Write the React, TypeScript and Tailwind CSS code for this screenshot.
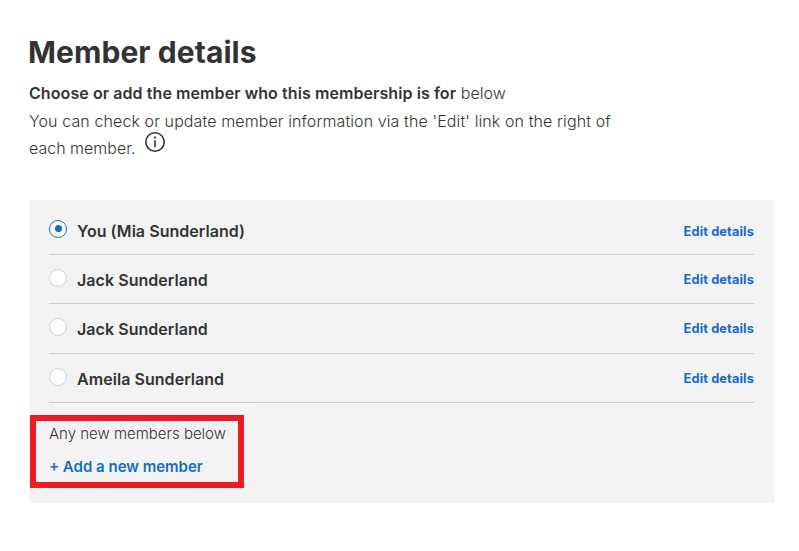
import React, { useState } from "react";

const members = [
  { id: 1, name: "You (Mia Sunderland)", row: "h-[55px] pt-[7px]", link: "pt-[2px]" },
  { id: 2, name: "Jack Sunderland", row: "h-[49px] pt-[2px]", link: "" },
  { id: 3, name: "Jack Sunderland", row: "h-[50px]", link: "" },
  { id: 4, name: "Ameila Sunderland", row: "h-[49px] pt-[2px]", link: "" },
];

function InfoIcon() {
  return (
    <svg className="mt-[-4px] ml-[9px] h-[22px] w-[22px]" viewBox="0 0 22 22" fill="none" stroke="#333333" strokeWidth="1.6">
      <circle cx="11" cy="11" r="9.2" />
      <path d="M11 9.2v7.1" />
      <circle cx="11" cy="6.6" r="1.1" fill="#333333" stroke="none" />
    </svg>
  );
}

export default function App() {
  const [selected, setSelected] = useState(1);

  return (
    <div className="h-[551px] w-[799px] overflow-hidden bg-white pl-[29px] font-[Inter,sans-serif] text-[#333333]">
      <h1 className="ml-[-1px] pt-[32px] text-[30px] leading-[40px] font-bold tracking-[0.07px]">Member details</h1>
      <p className="mt-[8px] text-[16px] leading-[27px] font-light tracking-[0.08px]">
        <span className="font-semibold">Choose or add the member who this membership is for</span> below
      </p>
      <div className="mt-[1px] text-[16px] leading-[27px] font-light">
        <p className="tracking-[0.1px]">You can check or update member information via the 'Edit' link on the right of</p>
        <div className="flex">
          <p>each member.</p>
          <InfoIcon />
        </div>
      </div>

      <div className="mt-[38px] h-[303px] w-[745px] bg-[#f3f3f3] px-5">
        {members.map((member) => (
          <div key={member.id} className={`flex items-center border-b border-[#cccccc] ${member.row}`}>
            <button
              role="radio"
              aria-checked={selected === member.id}
              aria-label={member.name}
              onClick={() => setSelected(member.id)}
              className={`mb-1 flex h-[18px] w-[18px] items-center justify-center rounded-full border bg-white ${selected === member.id ? "border-[#126cc8]" : "border-[#ccd2d8]"}`}
            >
              {selected === member.id && <span className="h-[7px] w-[7px] rounded-full bg-[#126cc8]" />}
            </button>
            <span className="ml-[10px] text-[16px] font-semibold tracking-[0.05px]">{member.name}</span>
            <a href="#" className={`ml-auto text-[12.8px] font-bold tracking-[0.12px] text-[#166bc5] ${member.link}`}>Edit details</a>
          </div>
        ))}
        <div className="mt-[12px] ml-[-19px] h-[73px] w-[214px] border-[6px] border-[#ed1c24] pt-px pl-[13px]">
          <p className="text-[15px] leading-[24px] font-light whitespace-nowrap">Any new members below</p>
          <a href="#" className="mt-[9px] block text-[15px] leading-[24px] font-semibold text-[#166bc5]">+ Add a new member</a>
        </div>
      </div>
    </div>
  );
}
